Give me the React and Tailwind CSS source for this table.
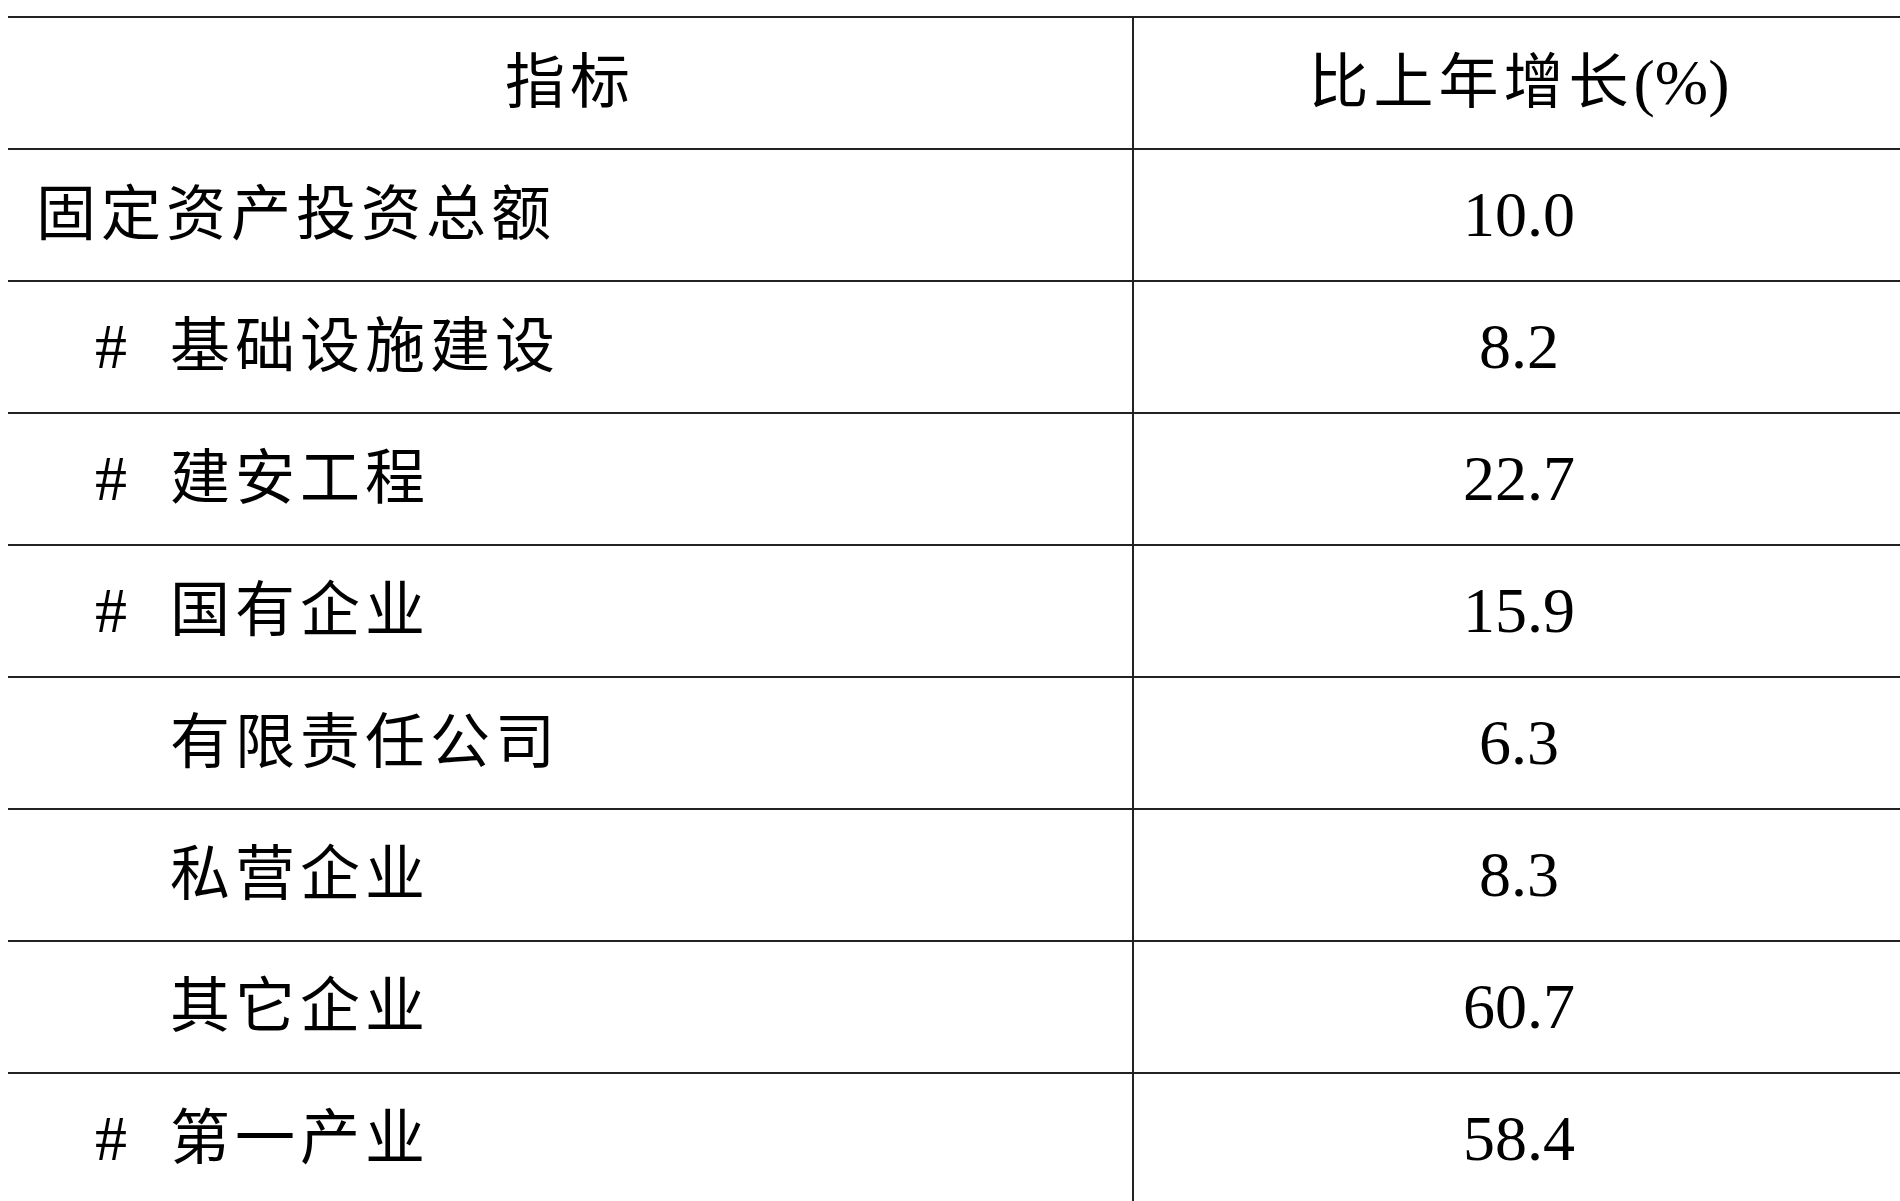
const rows = [
  { label: "固定资产投资总额", value: "10.0", indent: "none" },
  { label: "基础设施建设", value: "8.2", indent: "hash" },
  { label: "建安工程", value: "22.7", indent: "hash" },
  { label: "国有企业", value: "15.9", indent: "hash" },
  { label: "有限责任公司", value: "6.3", indent: "sub" },
  { label: "私营企业", value: "8.3", indent: "sub" },
  { label: "其它企业", value: "60.7", indent: "sub" },
  { label: "第一产业", value: "58.4", indent: "hash" },
];

const font = { fontFamily: '"Liberation Serif", "Noto Sans CJK SC", serif' };

function LabelCell({ row }) {
  if (row.indent === "none") {
    return (
      <div className="flex items-center pl-[28px] border-r-2 border-[#222]">
        <span className="text-[60px] tracking-[5px] leading-none">{row.label}</span>
      </div>
    );
  }
  return (
    <div className="flex items-center pl-[87px] border-r-2 border-[#222]">
      <span className="inline-block w-[75px] text-[64px] leading-none">
        {row.indent === "hash" ? "#" : ""}
      </span>
      <span className="text-[60px] tracking-[5px] leading-none">{row.label}</span>
    </div>
  );
}

export default function App() {
  return (
    <div className="w-[1900px] h-[1201px] overflow-hidden bg-white text-black" style={font}>
      <div className="ml-[8px] mt-[16px] w-[1920px] border-t-2 border-[#222]">
        <div className="grid grid-cols-[1126px_1fr] h-[132px] border-b-2 border-[#222]">
          <div className="flex items-center justify-center border-r-2 border-[#222]">
            <span className="text-[60px] tracking-[5px] leading-none">指标</span>
          </div>
          <div className="flex items-center justify-center pr-[24px]">
            <span className="text-[60px] tracking-[5px] leading-none">比上年增长</span>
            <span className="text-[64px] leading-none">(%)</span>
          </div>
        </div>
        {rows.map((row) => (
          <div
            key={row.label}
            className="grid grid-cols-[1126px_1fr] h-[132px] border-b-2 border-[#222]"
          >
            <LabelCell row={row} />
            <div className="flex items-center justify-center pr-[24px]">
              <span className="text-[64px] leading-none">{row.value}</span>
            </div>
          </div>
        ))}
      </div>
    </div>
  );
}
